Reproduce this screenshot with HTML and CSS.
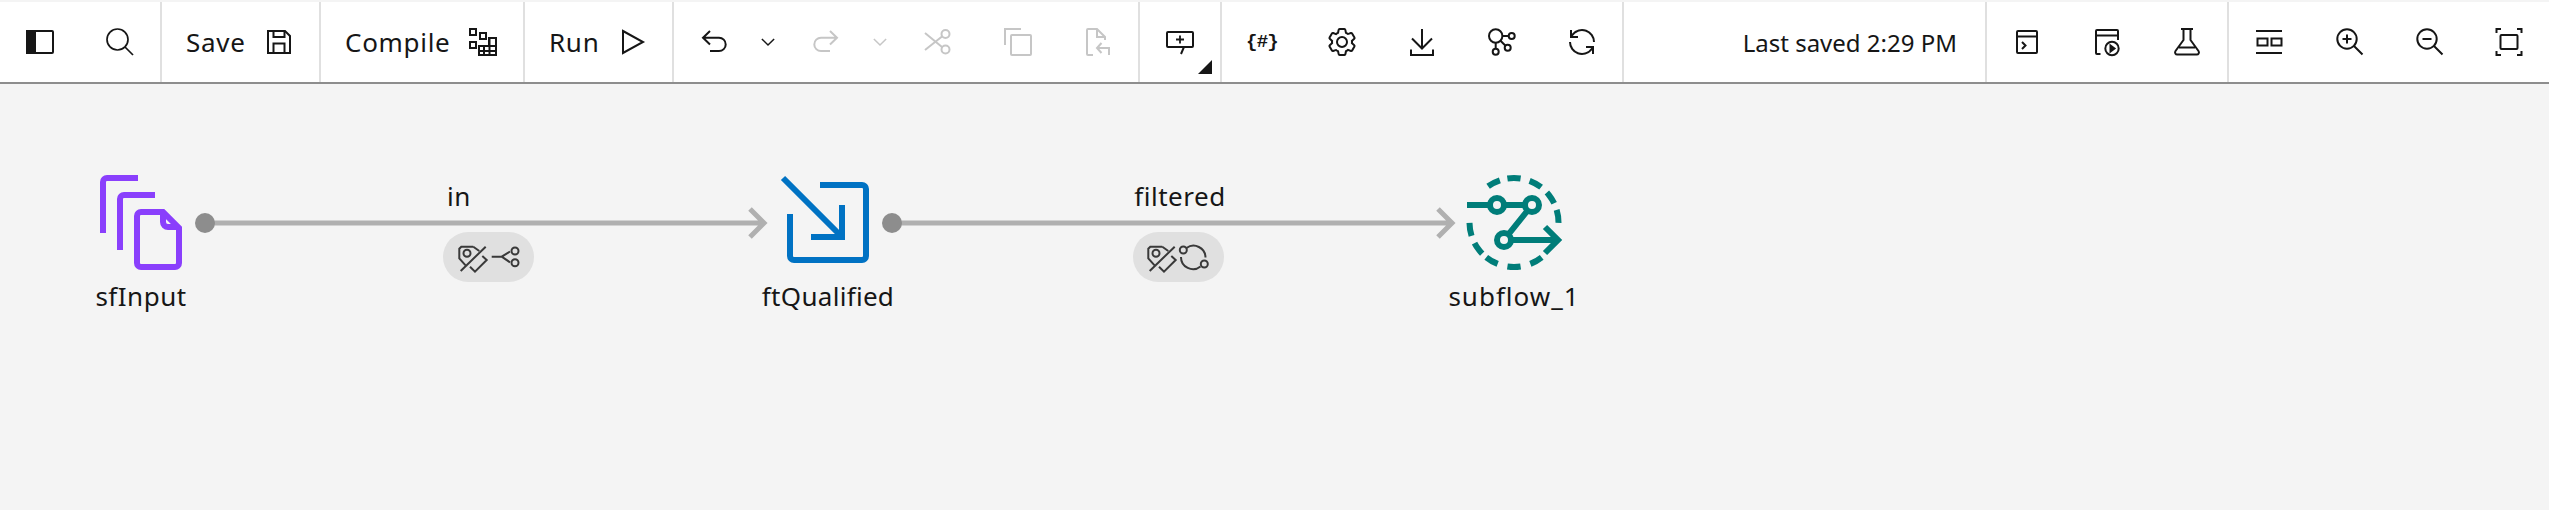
FILE: index.html
```html
<!DOCTYPE html>
<html lang="en">

<head>
  <meta charset="UTF-8">
  <meta name="viewport" content="width=device-width, initial-scale=1.0">
  <title>Flow Canvas</title>
  <link rel="stylesheet" href="styles.css">
</head>

<body>
  <!-- Toolbar -->
  <header class="toolbar">
    <div class="group">
      <button class="tool">
        <svg class="icon" viewBox="0 0 32 32"><rect x="3" y="5" width="26" height="22" rx="1"/><rect class="solid" x="3" y="5" width="8" height="22"/></svg>
      </button>
      <button class="tool">
        <svg class="icon thin" viewBox="0 0 32 32"><circle cx="13.500" cy="13.500" r="10.500"/><path d="M21 21l8 8"/></svg>
      </button>
    </div>

    <div class="group group-save">
      <button class="text-tool"><span>Save</span>
        <svg class="icon" viewBox="0 0 32 32"><path d="M5 5h17l5 5v17H5z"/><path d="M10.500 5v6h11V5M10.500 27V17.500h11V27"/></svg>
      </button>
    </div>
    <div class="group group-compile">
      <button class="text-tool"><span>Compile</span>
        <svg class="icon" viewBox="0 0 32 32"><path d="M3 3h6v6H3zM13 7h6v6h-6zM3 16h6v6H3zM22 12h7v17H12v-9h10zM22 20h7M12 25h17M17 20v9M22.500 12v17"/></svg>
      </button>
    </div>
    <div class="group group-run">
      <button class="text-tool"><span>Run</span>
        <svg class="icon" viewBox="0 0 32 32"><path d="M7 5l20 11L7 27z"/></svg>
      </button>
    </div>

    <div class="group group-edit">
      <button class="tool">
        <svg class="icon" viewBox="0 0 32 32"><path d="M12 5l-7 6.700 7 6.800M5 11.700h16a6.700 6.700 0 0 1 0 13.400h-9"/></svg>
      </button>
      <button class="tool tool-small">
        <svg class="icon thin" viewBox="0 0 32 32"><path d="M9 12.500l7 7 7-7"/></svg>
      </button>
      <button class="tool off">
        <svg class="icon" viewBox="0 0 32 32"><path d="M20 5l7 6.700-7 6.800M27 11.700H11a6.700 6.700 0 0 0 0 13.400h9"/></svg>
      </button>
      <button class="tool tool-small off">
        <svg class="icon thin" viewBox="0 0 32 32"><path d="M9 12.500l7 7 7-7"/></svg>
      </button>
      <button class="tool off">
        <svg class="icon" viewBox="0 0 32 32"><circle cx="23.500" cy="8" r="4"/><circle cx="23.500" cy="23.500" r="4"/><path d="M20 10.500L3 24M20 21L3 7"/></svg>
      </button>
      <button class="tool off">
        <svg class="icon" viewBox="0 0 32 32"><path d="M3 19V3h16"/><rect x="9" y="9" width="20" height="20" rx="1"/></svg>
      </button>
      <button class="tool off">
        <svg class="icon" viewBox="0 0 32 32"><path d="M11 29H6a1 1 0 0 1-1-1V4a1 1 0 0 1 1-1h9l8 8v3M15 3v8h8"/><path d="M19.500 17l-4.500 5 4.500 5M15 22h12v7"/></svg>
      </button>
    </div>

    <div class="group">
      <button class="tool">
        <svg class="icon" viewBox="0 0 32 32"><path d="M20 21h8a1 1 0 0 0 1-1V7a1 1 0 0 0-1-1H4a1 1 0 0 0-1 1v13a1 1 0 0 0 1 1h16l-3 7"/><path class="plus" d="M16 9.500v8M12 13.500h8"/></svg>
        <span class="corner"></span>
      </button>
    </div>

    <div class="group">
      <button class="tool"><span class="var-glyph">{#}</span></button>
      <button class="tool">
        <svg class="icon-solid" viewBox="0 0 32 32"><path d="M27 16.760c0-.25 0-.5 0-.76s0-.51 0-.77l1.920-1.680A2 2 0 0 0 29.300 11l-2.360-4a2 2 0 0 0-1.730-1 2 2 0 0 0-.64.100l-2.430.82a11.350 11.350 0 0 0-1.310-.75l-.51-2.520a2 2 0 0 0-2-1.610h-4.680a2 2 0 0 0-2 1.610l-.51 2.520a11.480 11.480 0 0 0-1.320.75l-2.380-.86A2 2 0 0 0 6.790 6a2 2 0 0 0-1.730 1L2.700 11a2 2 0 0 0 .41 2.510L5 15.240c0 .25 0 .5 0 .76s0 .51 0 .77l-1.890 1.680A2 2 0 0 0 2.700 21l2.360 4a2 2 0 0 0 1.730 1 2 2 0 0 0 .64-.1l2.430-.82a11.350 11.350 0 0 0 1.310.75l.51 2.520a2 2 0 0 0 2 1.610h4.720a2 2 0 0 0 2-1.610l.51-2.520a11.480 11.480 0 0 0 1.320-.75l2.420.82a2 2 0 0 0 .64.1 2 2 0 0 0 1.730-1l2.280-4a2 2 0 0 0-.41-2.510zM25.210 24l-3.430-1.160a8.860 8.860 0 0 1-2.710 1.570L18.360 28h-4.720l-.71-3.550a9.360 9.360 0 0 1-2.700-1.570L6.790 24l-2.360-4 2.720-2.400a8.900 8.900 0 0 1 0-3.130L4.430 12l2.360-4 3.430 1.160a8.860 8.860 0 0 1 2.710-1.570L13.640 4h4.720l.71 3.550a9.360 9.360 0 0 1 2.700 1.570L25.210 8l2.360 4-2.720 2.400a8.900 8.900 0 0 1 0 3.130L27.570 20zM16 22a6 6 0 1 1 6-6 5.940 5.940 0 0 1-6 6zm0-10a3.910 3.910 0 0 0-4 4 3.910 3.910 0 0 0 4 4 3.910 3.910 0 0 0 4-4 3.910 3.910 0 0 0-4-4z"/></svg>
      </button>
      <button class="tool">
        <svg class="icon" viewBox="0 0 32 32"><path d="M16 3v19M6 12.500l10 10 10-10M5 23.500V29h22v-5.500"/></svg>
      </button>
      <button class="tool">
        <svg class="icon" viewBox="0 0 32 32"><circle cx="9.700" cy="10" r="6.700"/><circle cx="25.700" cy="10" r="3"/><circle cx="21.700" cy="21.700" r="3"/><circle cx="9.700" cy="25.700" r="3"/><path d="M16.400 10h6.300M14.500 14.800l5 5M9.700 16.700v6"/></svg>
      </button>
      <button class="tool">
        <svg class="icon-solid" viewBox="0 0 32 32"><path d="M12 10H6.780A11 11 0 0 1 27 16h2A13 13 0 0 0 6 7.680V4H4v8h8zM20 22h5.220A11 11 0 0 1 5 16H3a13 13 0 0 0 23 8.320V28h2v-8h-8z"/></svg>
      </button>
    </div>

    <div class="group group-status">
      <span class="status">Last saved 2:29 PM</span>
    </div>

    <div class="group">
      <button class="tool">
        <svg class="icon" viewBox="0 0 32 32"><rect x="6" y="5" width="20" height="22" rx="1"/><path d="M6 10.500h20M11 16l3.500 3.500-3.500 3.500"/></svg>
      </button>
      <button class="tool">
        <svg class="icon" viewBox="0 0 32 32"><path d="M9.500 28H6a1 1 0 0 1-1-1V5a1 1 0 0 1 1-1h20a1 1 0 0 1 1 1v9M5 9.500h22"/><circle cx="21" cy="22.500" r="6.700"/><path class="solid" d="M19.500 19.500l4 3-4 3z"/></svg>
      </button>
      <button class="tool">
        <svg class="icon" viewBox="0 0 32 32"><path d="M10 3h12M12.500 3v11L4.500 25a2.200 2.200 0 0 0 2 3.500h19a2.200 2.200 0 0 0 2-3.500l-8-11V3M8 21.500h16"/></svg>
      </button>
    </div>

    <div class="group group-end">
      <button class="tool">
        <svg class="icon" viewBox="0 0 32 32"><path d="M3 5h26M3 27h26"/><rect x="4.500" y="12.500" width="10" height="7"/><rect x="18.500" y="12.500" width="10" height="7"/></svg>
      </button>
      <button class="tool">
        <svg class="icon" viewBox="0 0 32 32"><circle cx="14" cy="13" r="9.700"/><path d="M21 20l8.500 8.500M14 8.500v9M9.500 13h9"/></svg>
      </button>
      <button class="tool">
        <svg class="icon" viewBox="0 0 32 32"><circle cx="14" cy="13" r="9.700"/><path d="M21 20l8.500 8.500M9.500 13h9"/></svg>
      </button>
      <button class="tool">
        <svg class="icon" viewBox="0 0 32 32"><path d="M3.500 7V3h4.500M24 3h4.500v4M28.500 25v4H24M8 29H3.500v-4"/><rect x="7.500" y="9" width="17" height="14" rx="1"/></svg>
      </button>
    </div>
  </header>

  <!-- Flow canvas -->
  <main class="canvas">
    <svg class="links" width="2549" height="426" viewBox="0 84 2549 426">
      <path class="link" d="M205 223H763M750 209l14 14-14 14"/>
      <path class="link" d="M892 223H1451M1438 209l14 14-14 14"/>
      <circle class="port" cx="205" cy="223" r="10"/>
      <circle class="port" cx="892" cy="223" r="10"/>

      <!-- sfInput -->
      <g class="node-input">
        <path d="M103 233V182a4 4 0 0 1 4-4H138M120 250V199a4 4 0 0 1 4-4H155"/>
        <path d="M141 212H163L179 228V263a4 4 0 0 1-4 4H141a4 4 0 0 1-4-4V216a4 4 0 0 1 4-4zM163 212V222a5 5 0 0 0 5 5H179"/>
      </g>

      <!-- ftQualified -->
      <g class="node-filter">
        <path d="M820 185H862a4 4 0 0 1 4 4V256a4 4 0 0 1-4 4H794a4 4 0 0 1-4-4V214"/>
        <path d="M783 178L842 237M842 205V237H811"/>
      </g>

      <!-- subflow_1 -->
      <g class="node-subflow">
        <circle class="dashes" cx="1514" cy="222.500" r="44.500" pathLength="360" stroke-dasharray="17 13 17 13 17 7 17 10 17 55 17 10 17 12 17 10 17 9 17 51" transform="rotate(51.500 1514 222.500)"/>
        <path d="M1467 205H1532L1504 240H1556M1545 227L1558 240L1545 253"/>
        <circle cx="1497" cy="205" r="7"/>
        <circle cx="1532" cy="205" r="7"/>
        <circle cx="1504" cy="240" r="7"/>
      </g>
    </svg>

    <span class="label label-in">in</span>
    <span class="label label-filtered">filtered</span>
    <span class="label label-input">sfInput</span>
    <span class="label label-filter">ftQualified</span>
    <span class="label label-subflow">subflow_1</span>

    <div class="pill pill-in">
      <svg class="pill-icons" viewBox="0 0 91 50">
        <path d="M30.300 14.700H18.300L16.300 16.700V26.300L23.700 34.700M30.300 14.700L36.300 19M42.700 14.700L17.700 39M27 34.700L32 39.700L43.700 28L39.300 24"/>
        <circle cx="24" cy="21.300" r="3.500"/>
        <path d="M48.700 24.700H58.700L67 19.500M58.700 24.700L67 30.300"/>
        <circle cx="72" cy="19" r="3.500"/>
        <circle cx="72" cy="30.700" r="3.500"/>
      </svg>
    </div>
    <div class="pill pill-filtered">
      <svg class="pill-icons" viewBox="0 0 91 50">
        <path d="M29.300 14.700H17.300L15.300 16.700V26.300L22.700 34.700M29.300 14.700L35.300 19M41.700 14.700L16.700 39M26 34.700L31 39.700L42.700 28L38.300 24"/>
        <circle cx="23" cy="21.300" r="3.500"/>
        <circle cx="50.300" cy="18" r="3.500"/>
        <circle cx="71.300" cy="32" r="3.500"/>
        <path d="M53.500 16A12 12 0 0 1 72.500 25.500M67.500 34.500A12 12 0 0 1 48 25"/>
      </svg>
    </div>
  </main>
</body>

</html>
```

FILE: styles.css
```css
/* Page */
html,
body {
  margin: 0;
  padding: 0;
  overflow: hidden;
}

body {
  font-family: "Noto Sans", sans-serif;
  background: #f4f4f4;
  color: #161616;
  padding-top: 2px;
}

/* Toolbar */
.toolbar {
  display: flex;
  height: 80px;
  background: white;
  border-bottom: 2px solid #8d8d8d;
  overflow: hidden;
}

.group {
  display: flex;
  flex-shrink: 0;
  border-right: 2px solid #e0e0e0;
}

.group-save {
  width: 157px;
}

.group-compile {
  width: 202px;
}

.group-run {
  width: 147px;
}

.group-status {
  flex: 1;
  justify-content: flex-end;
  align-items: center;
  padding-right: 28px;
}

.group-end {
  border-right: none;
}

.tool,
.text-tool {
  position: relative;
  display: flex;
  align-items: center;
  justify-content: center;
  flex-shrink: 0;
  width: 80px;
  height: 80px;
  padding: 0;
  border: none;
  background: none;
  color: #161616;
  font-family: inherit;
}

.text-tool {
  width: 100%;
  justify-content: space-between;
  padding: 0 24px 0 24px;
  font-size: 26px;
  letter-spacing: 0.7px;
}

.tool-small {
  width: 28px;
}

.group-edit .tool-small {
  margin-right: 4px;
}

.off {
  color: #c6c6c6;
}

.icon {
  width: 32px;
  height: 32px;
  fill: none;
  stroke: currentColor;
  stroke-width: 2;
}

.icon.thin {
  stroke-width: 1.7;
}

.icon .solid {
  fill: currentColor;
}

.icon .plus {
  stroke-width: 1.8;
}

.icon-solid {
  width: 32px;
  height: 32px;
  fill: currentColor;
  fill-rule: evenodd;
}

.var-glyph {
  font-family: "Liberation Mono", monospace;
  font-size: 19px;
  font-weight: bold;
  letter-spacing: -0.8px;
}

.corner {
  position: absolute;
  right: 8px;
  bottom: 8px;
  width: 0;
  height: 0;
  border-left: 14px solid transparent;
  border-bottom: 14px solid #161616;
}

.status {
  font-size: 24px;
}

/* Canvas */
.canvas {
  position: relative;
  height: 426px;
}

.links {
  position: absolute;
  left: 0;
  top: 0;
}

.link {
  fill: none;
  stroke: #b0b0b0;
  stroke-width: 5;
}

.port {
  fill: #8d8d8d;
}

.node-input path,
.node-filter path,
.node-subflow path,
.node-subflow circle {
  fill: none;
  stroke-width: 6;
}

.node-input path {
  stroke: #8a3ffc;
}

.node-filter path {
  stroke: #0072c3;
}

.node-subflow path,
.node-subflow circle {
  stroke: #007d79;
}

.node-subflow circle {
  fill: #f4f4f4;
}

.node-subflow .dashes {
  fill: none;
}

.label {
  position: absolute;
  transform: translateX(-50%);
  font-size: 26px;
  line-height: 36px;
  letter-spacing: 0.5px;
  white-space: nowrap;
}

.label-in {
  left: 459px;
  top: 94px;
}

.label-filtered {
  left: 1180px;
  top: 94px;
}

.label-input {
  left: 141px;
  top: 194px;
}

.label-filter {
  left: 828px;
  top: 194px;
  letter-spacing: 0.3px;
}

.label-subflow {
  left: 1514px;
  top: 194px;
  letter-spacing: 1px;
}

.pill {
  position: absolute;
  top: 148px;
  width: 91px;
  height: 50px;
  border-radius: 25px;
  background: #e0e0e0;
}

.pill-in {
  left: 443px;
}

.pill-filtered {
  left: 1133px;
}

.pill-icons {
  display: block;
  width: 91px;
  height: 50px;
  fill: none;
  stroke: #393939;
  stroke-width: 2;
}
```
